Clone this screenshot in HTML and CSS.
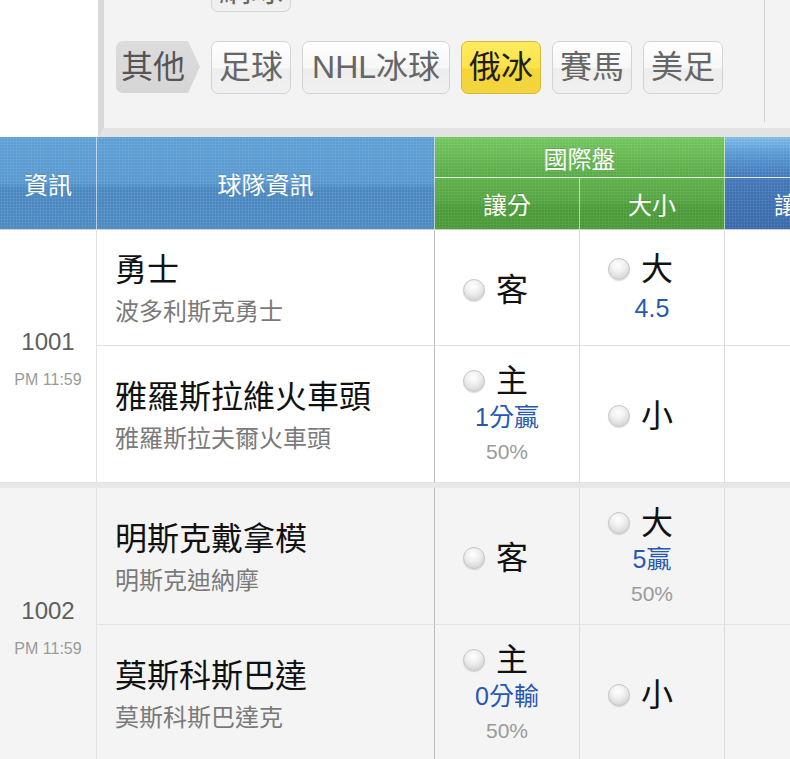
FILE: index.html
```html
<!DOCTYPE html>
<html lang="zh-Hant">
<head>
<meta charset="utf-8">
<title>國際盤</title>
<link rel="stylesheet" href="styles.css">
</head>
<body>
<div class="page">
  <div class="top">
    <div class="top-blank"></div>
    <div class="panel">
      <div class="panel-inner">
        <div class="btn-row prev-row"><span class="btn">網球</span></div>
        <div class="btn-row">
          <span class="cat">其他</span>
          <span class="btn">足球</span>
          <span class="btn wide">NHL冰球</span>
          <span class="btn on">俄冰</span>
          <span class="btn">賽馬</span>
          <span class="btn">美足</span>
        </div>
      </div>
    </div>
  </div>

  <div class="board">
    <div class="grid head">
      <div class="h blue span2">資訊</div>
      <div class="h blue span2">球隊資訊</div>
      <div class="h green-top c2">國際盤</div>
      <div class="h blue-top c2"></div>
      <div class="h green-sub">讓分</div>
      <div class="h green-sub">大小</div>
      <div class="h blue-sub">讓分</div>
      <div class="h blue-sub">大小</div>
    </div>

    <div class="grid game">
      <div class="info span2"><div class="num">1001</div><div class="time">PM 11:59</div></div>
      <div class="team"><div class="name">勇士</div><div class="full">波多利斯克勇士</div></div>
      <div class="odds"><div class="pick"><i class="radio"></i>客</div></div>
      <div class="odds"><div class="pick"><i class="radio"></i>大</div><div class="line">4.5</div></div>
      <div class="odds"></div>
      <div class="odds"></div>
      <div class="team"><div class="name">雅羅斯拉維火車頭</div><div class="full">雅羅斯拉夫爾火車頭</div></div>
      <div class="odds"><div class="pick"><i class="radio"></i>主</div><div class="line">1分贏</div><div class="pct">50%</div></div>
      <div class="odds"><div class="pick"><i class="radio"></i>小</div></div>
      <div class="odds"></div>
      <div class="odds"></div>
    </div>

    <div class="grid game alt">
      <div class="info span2"><div class="num">1002</div><div class="time">PM 11:59</div></div>
      <div class="team"><div class="name">明斯克戴拿模</div><div class="full">明斯克迪納摩</div></div>
      <div class="odds"><div class="pick"><i class="radio"></i>客</div></div>
      <div class="odds"><div class="pick"><i class="radio"></i>大</div><div class="line">5贏</div><div class="pct">50%</div></div>
      <div class="odds"></div>
      <div class="odds"></div>
      <div class="team"><div class="name">莫斯科斯巴達</div><div class="full">莫斯科斯巴達克</div></div>
      <div class="odds"><div class="pick"><i class="radio"></i>主</div><div class="line">0分輸</div><div class="pct">50%</div></div>
      <div class="odds"><div class="pick"><i class="radio"></i>小</div></div>
      <div class="odds"></div>
      <div class="odds"></div>
    </div>
  </div>
</div>
</body>
</html>
```
FILE: styles.css
```css
* { box-sizing: border-box; }
html, body { margin: 0; padding: 0; background: #fff; }
body {
  font-family: "Liberation Sans", "Noto Sans CJK TC", sans-serif;
  overflow: hidden;
}
.page { width: 790px; height: 759px; overflow: hidden; }

/* ---------- top filter panel ---------- */
.top { display: flex; height: 137px; }
.top-blank { width: 98px; flex: none; background: #fff; }
.panel {
  flex: none;
  width: 692px;
  background: #f3f3f3;
  border-left: 6px solid #d8d8d8;
  border-bottom: 9px solid #e3e3e3;
}
.panel-inner {
  width: 661px;
  height: 122px;
  border-right: 1px solid #d2d2d2;
  overflow: hidden;
  padding-left: 12px;
}
.btn-row { display: flex; gap: 11px; height: 53px; align-items: flex-start; }
.prev-row { margin-top: -41px; padding-left: 95px; }
.prev-row .btn { line-height: 60px; }
.btn-row + .btn-row { margin-top: 29px; }

.cat {
  width: 84px;
  height: 52px;
  padding-left: 5px;
  font-size: 32px;
  line-height: 52px;
  color: #555;
  background: linear-gradient(#dcdcdc, #d6d6d6);
  border-radius: 7px 0 0 7px;
  clip-path: polygon(0 0, 72px 0, 100% 50%, 72px 100%, 0 100%);
}
.btn {
  height: 53px;
  padding: 0 7px;
  font-size: 32px;
  line-height: 51px;
  color: #666;
  border: 1px solid #d3d3d3;
  border-radius: 7px;
  background: linear-gradient(#fefefe, #f7f7f7 50%, #ededed 53%, #f1f1f1);
  white-space: nowrap;
  overflow: hidden;
}
.btn.wide { padding: 0 9px; }
.btn.on {
  color: #1e1e1e;
  border-color: #d3b83c;
  background: linear-gradient(#ffeb5e, #fbe24c 50%, #f4d637 53%, #f2d53f);
}

/* ---------- table grids ---------- */
.board { width: 1015px; }
.grid {
  display: grid;
  grid-template-columns: 97px 338px 145px 145px 145px 145px;
}
.span2 { grid-row: span 2; }
.c2 { grid-column: span 2; }

/* header */
.head { grid-template-rows: 41px 52px; }
.h {
  display: flex;
  align-items: center;
  justify-content: center;
  color: #fff;
  font-size: 24px;
  white-space: nowrap;
  text-shadow: 0 -1px 0 rgba(0,0,0,.12);
  border-right: 1px solid rgba(255,255,255,.6);
  border-bottom: 1px solid #cfcfcf;
}
.blue {
  background:
    radial-gradient(circle, rgba(255,255,255,.14) 0.7px, transparent 1.2px) 0 0 / 3px 3px,
    linear-gradient(#5e9fd5, #5898cf 50%, #4a87bf 57%, #4c8ac2);
}
.green-top {
  border-bottom-color: #e4efe1;
  background:
    radial-gradient(circle, rgba(255,255,255,.14) 0.7px, transparent 1.2px) 0 0 / 3px 3px,
    linear-gradient(#72c55f, #62b44f 60%, #58aa47);
}
.green-sub {
  background:
    radial-gradient(circle, rgba(255,255,255,.12) 0.7px, transparent 1.2px) 0 0 / 3px 3px,
    linear-gradient(#5daf4a, #55a643 45%, #4c9b39 56%, #4a9937);
}
.blue-top {
  border-bottom-color: #e3e9f2;
  background:
    radial-gradient(circle, rgba(255,255,255,.14) 0.7px, transparent 1.2px) 0 0 / 3px 3px,
    linear-gradient(#7bbbe7, #5796d2 45%, #4079b9);
}
.blue-sub {
  justify-content: flex-start;
  padding-left: 49px;
  background:
    radial-gradient(circle, rgba(255,255,255,.12) 0.7px, transparent 1.2px) 0 0 / 3px 3px,
    linear-gradient(#4478b8, #3e70b1 50%, #3a6aab);
}

/* body */
.game > div {
  background: #fff;
  border-right: 1px solid #dcdcdc;
  border-bottom: 1px solid #e3e3e3;
}
.game.alt { border-top: 5px solid #e8e8e8; }
.game.alt > div { background: #f4f4f4; }

.info {
  display: flex;
  flex-direction: column;
  align-items: center;
  justify-content: center;
  padding-top: 6px;
  border-right-color: #e2e2e2 !important;
}
.num { font-size: 24px; line-height: 30px; color: #5e5e5e; }
.time { font-size: 16px; line-height: 22px; margin-top: 12px; color: #9a9a9a; }

.team {
  display: flex;
  flex-direction: column;
  justify-content: center;
  padding: 18px 0 18px 18px;
  border-right-color: #bdbdbd !important;
}
.name { font-size: 32px; line-height: 44px; color: #111; white-space: nowrap; }
.full { font-size: 24px; line-height: 31px; margin-top: 4px; color: #7a7a7a; white-space: nowrap; }

.odds {
  display: flex;
  flex-direction: column;
  align-items: center;
  justify-content: center;
  padding: 17px 0 13px;
}
.pick {
  display: flex;
  align-items: center;
  gap: 11px;
  padding-right: 23px;
  font-size: 32px;
  line-height: 36px;
  color: #111;
}
.radio {
  display: block;
  width: 22px;
  height: 22px;
  border-radius: 50%;
  border: 1px solid #c6c6c6;
  background: radial-gradient(circle at 45% 32%, #ffffff 0%, #f0f0f0 38%, #d6d6d6 78%, #c4c4c4 100%);
  box-shadow: 0 1px 1px rgba(0,0,0,.14);
}
.line { font-size: 25px; line-height: 36px; color: #2658b2; }
.line:last-child { line-height: 42px; }
.pct { font-size: 21px; line-height: 34px; color: #9a9a9a; }
```
